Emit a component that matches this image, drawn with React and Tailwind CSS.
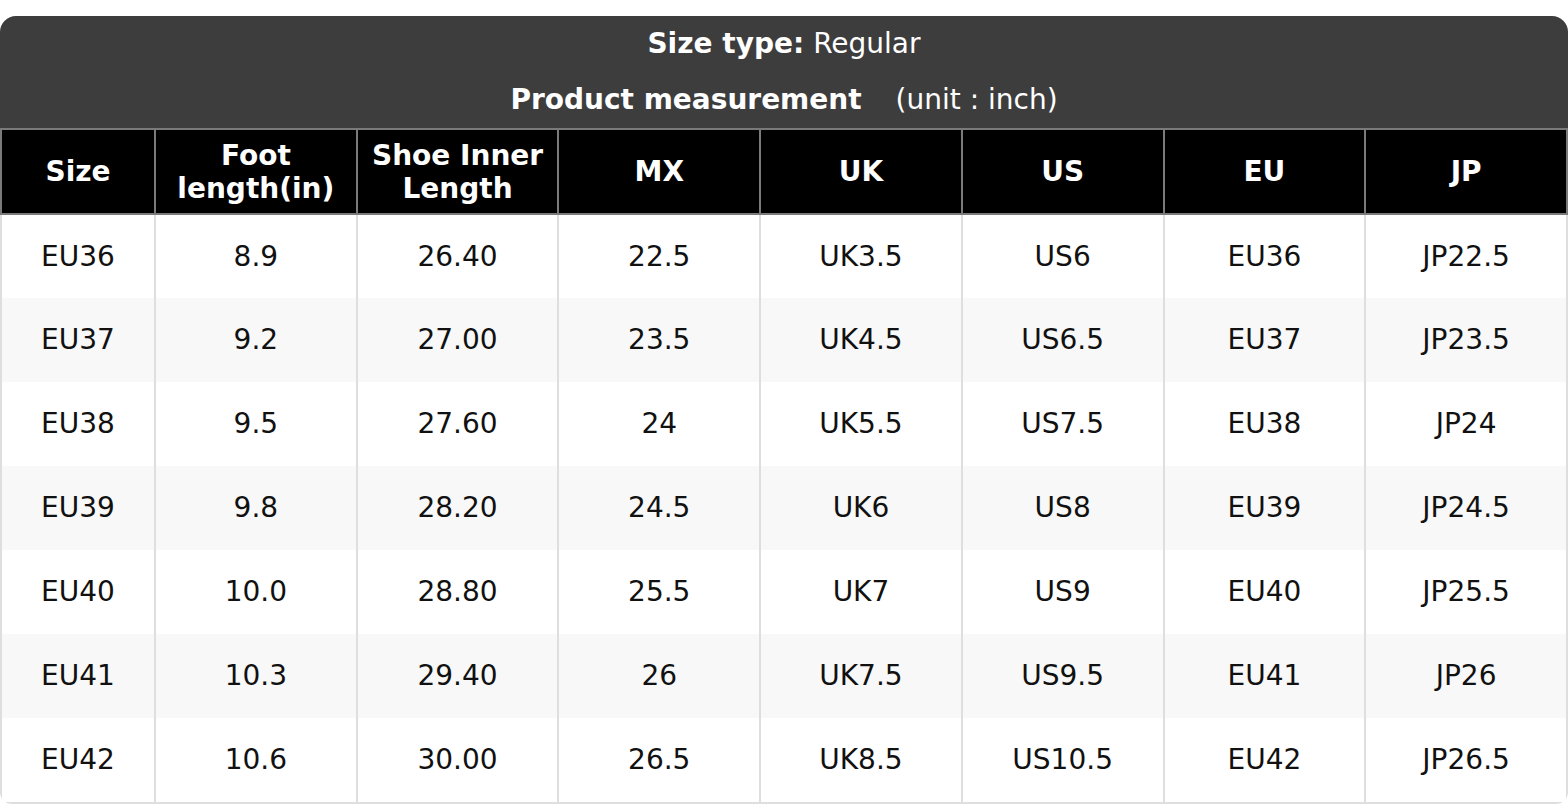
const columns = ['Size', 'Foot length(in)', 'Shoe Inner Length', 'MX', 'UK', 'US', 'EU', 'JP'];

const rows = [
  ['EU36', '8.9', '26.40', '22.5', 'UK3.5', 'US6', 'EU36', 'JP22.5'],
  ['EU37', '9.2', '27.00', '23.5', 'UK4.5', 'US6.5', 'EU37', 'JP23.5'],
  ['EU38', '9.5', '27.60', '24', 'UK5.5', 'US7.5', 'EU38', 'JP24'],
  ['EU39', '9.8', '28.20', '24.5', 'UK6', 'US8', 'EU39', 'JP24.5'],
  ['EU40', '10.0', '28.80', '25.5', 'UK7', 'US9', 'EU40', 'JP25.5'],
  ['EU41', '10.3', '29.40', '26', 'UK7.5', 'US9.5', 'EU41', 'JP26'],
  ['EU42', '10.6', '30.00', '26.5', 'UK8.5', 'US10.5', 'EU42', 'JP26.5'],
];

const headLabels = {
  'Foot length(in)': <>Foot<br />length(in)</>,
  'Shoe Inner Length': <>Shoe Inner<br />Length</>,
};

const App = () => {
  return (
    <div className="min-h-screen bg-white pt-4 font-['DejaVu_Sans',sans-serif] text-[28px]">
      <div className="rounded-t-2xl rounded-b-xl overflow-hidden">
        <div className="bg-[#3d3d3d] text-white">
          <div className="h-[56px] flex items-center justify-center">
            <span className="font-bold">Size type:</span>
            <span className="ml-[9px]">Regular</span>
          </div>
          <div className="h-[56px] flex items-center justify-center">
            <span className="font-bold">Product measurement</span>
            <span className="ml-[34px]">(unit : inch)</span>
          </div>
        </div>
        <table className="w-full table-fixed border-collapse">
          <colgroup>
            <col className="w-[154px]" />
            {columns.slice(1).map((c) => (
              <col key={c} />
            ))}
          </colgroup>
          <thead>
            <tr className="bg-black text-white">
              {columns.map((c) => (
                <th
                  key={c}
                  className="h-[85px] border-2 border-[#7a7a7a] font-bold leading-[33px] text-center align-middle"
                >
                  {headLabels[c] || c}
                </th>
              ))}
            </tr>
          </thead>
          <tbody>
            {rows.map((row, i) => (
              <tr key={row[0]} className={i % 2 === 1 ? 'bg-[#f8f8f8]' : 'bg-white'}>
                {row.map((cell, j) => (
                  <td
                    key={j}
                    className="h-[84px] border-x-2 border-[#dedede] text-center align-middle text-[#111]"
                  >
                    {cell}
                  </td>
                ))}
              </tr>
            ))}
          </tbody>
        </table>
        <div className="h-[2px] bg-[#dedede]" />
      </div>
    </div>
  );
};

export default App;
